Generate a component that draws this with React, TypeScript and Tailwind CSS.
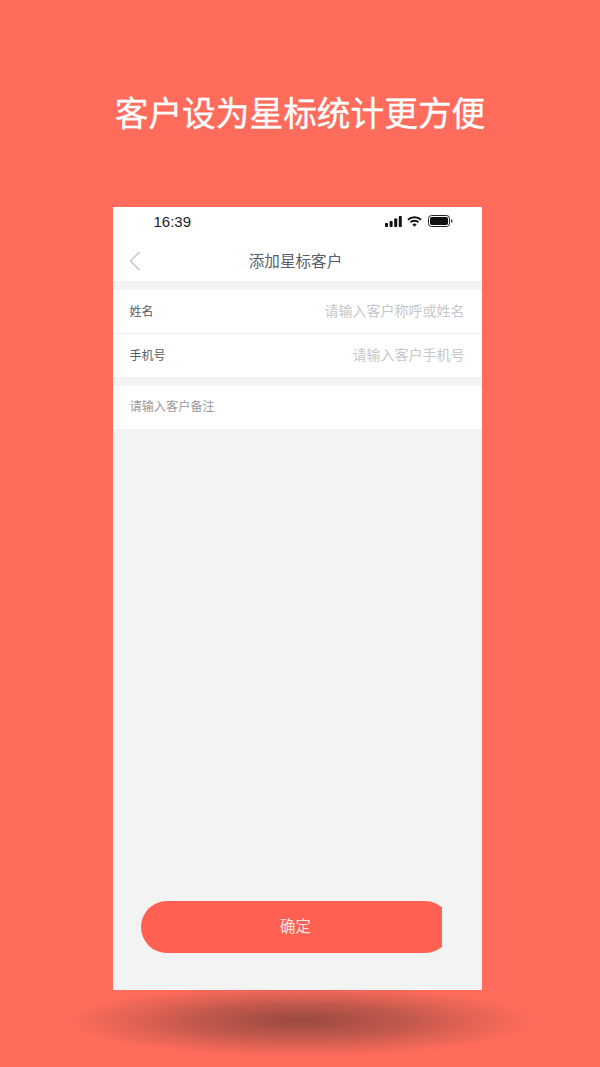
export default function App() {
  const font = { fontFamily: '"Noto Sans CJK SC", sans-serif' };
  return (
    <div className="relative w-[600px] h-[1067px] overflow-hidden bg-[#ff6c5c] flex flex-col items-center" style={font}>
      <h1 className="mt-[85px] h-[54px] leading-[54px] text-[33.7px] font-normal [-webkit-text-stroke:0.35px_white] text-white whitespace-nowrap">客户设为星标统计更方便</h1>

      <div className="absolute left-[65px] top-[985px] w-[470px] h-[72px] rounded-[50%] bg-[radial-gradient(closest-side,rgba(70,50,45,0.42)_0%,rgba(70,50,45,0.3)_50%,rgba(70,50,45,0.16)_72%,rgba(70,50,45,0)_100%)]" />
      <div className="absolute left-[175px] top-[1000px] w-[250px] h-[40px] rounded-[50%] bg-[radial-gradient(closest-side,rgba(60,35,30,0.2)_0%,rgba(60,35,30,0.08)_55%,rgba(60,35,30,0)_100%)]" />

      <div className="relative mt-[68px] ml-[-6px] w-[369px] h-[783px] bg-[#f3f3f4] flex flex-col">
        <div className="bg-white h-[74px] flex flex-col shrink-0">
          <div className="h-[29px] flex items-center justify-between pl-[41px] pr-[29px]">
            <span className="text-[15px] text-[#1d1d1f] leading-none font-['Liberation_Sans',sans-serif]">16:39</span>
            <div className="flex items-center gap-[5px] mb-[1px]">
              <svg width="17" height="11" viewBox="0 0 17 11">
                <rect x="0" y="7" width="3" height="4" rx="0.7" fill="#111" />
                <rect x="4.6" y="5" width="3" height="6" rx="0.7" fill="#111" />
                <rect x="9.2" y="2.5" width="3" height="8.5" rx="0.7" fill="#111" />
                <rect x="13.8" y="0" width="3" height="11" rx="0.7" fill="#111" />
              </svg>
              <svg width="15" height="11" viewBox="0 0 15 11" fill="none" stroke="#111" strokeWidth="2">
                <path d="M1 3.8C4.6 .4 10.4 .4 14 3.8" />
                <path d="M3.5 6.2C5.7 4.2 9.3 4.2 11.5 6.2" />
                <path d="M7.5 10.8L5.3 8.4C6.6 7.3 8.4 7.3 9.7 8.4Z" fill="#111" stroke="none" />
              </svg>
              <svg width="25" height="12" viewBox="0 0 25 12" className="ml-[1px]">
                <rect x="0.5" y="0.5" width="21" height="11" rx="3" fill="none" stroke="#222" />
                <rect x="2" y="2" width="18" height="8" rx="1.7" fill="#111" />
                <path d="M23 4.2C24 4.5 24.5 5.2 24.5 6S24 7.5 23 7.8Z" fill="#333" />
              </svg>
            </div>
          </div>
          <div className="relative h-[45px] flex items-center justify-center">
            <svg width="12" height="20" viewBox="0 0 12 20" fill="none" stroke="#c4c4c6" strokeWidth="1.4" className="absolute left-[16px] top-[15px]">
              <path d="M10.5 1L1.5 10L10.5 19" />
            </svg>
            <span className="text-[15.6px] leading-none text-[#5a5e6c] ml-[-3px] mt-[4px]">添加星标客户</span>
          </div>
        </div>

        <div className="mt-[9px] bg-white flex flex-col">
          <div className="h-[44px] flex items-center justify-between pl-[17px] pr-[17px] border-b border-[#eeeef0]">
            <span className="text-[12px] text-[#565a66] mb-[2px]">姓名</span>
            <span className="text-[14px] text-[#c6c7ca] mb-[2px]">请输入客户称呼或姓名</span>
          </div>
          <div className="h-[43px] flex items-center justify-between pl-[17px] pr-[17px]">
            <span className="text-[12px] text-[#565a66] mb-[1px]">手机号</span>
            <span className="text-[14px] text-[#c6c7ca] mb-[2px]">请输入客户手机号</span>
          </div>
        </div>

        <div className="mt-[9px] h-[43px] bg-white flex items-center pl-[17px]">
          <span className="text-[12.2px] text-[#97989e] mb-[3px]">请输入客户备注</span>
        </div>

        <div className="mt-auto mb-[37px] ml-[28px] w-[301px] h-[52px] overflow-hidden">
          <div className="w-[310px] h-[52px] rounded-[26px] bg-[#ff6052] flex items-center justify-center text-[15.5px] text-[#fde6e2] pb-[2px]">确定</div>
        </div>
      </div>
    </div>
  );
}
